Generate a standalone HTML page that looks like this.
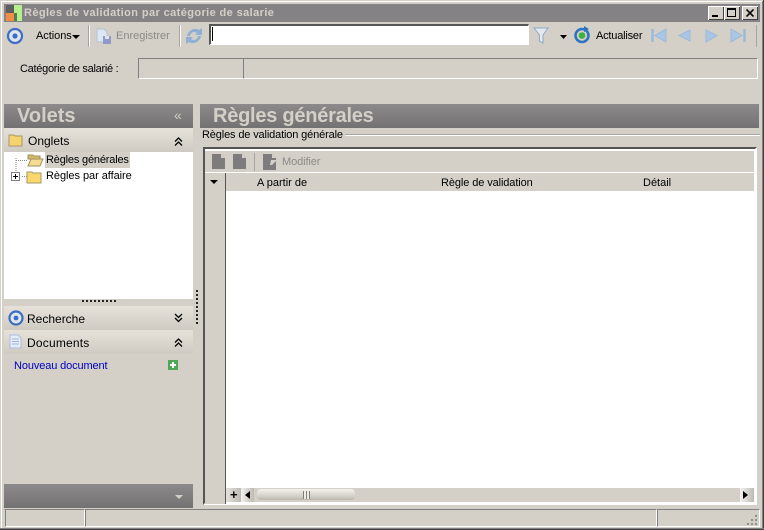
<!DOCTYPE html>
<html><head><meta charset="utf-8"><style>
html,body{margin:0;padding:0;background:#d4d0c8;}
#w{position:relative;width:764px;height:530px;overflow:hidden;background:#d4d0c8;font:11px "Liberation Sans",sans-serif;color:#000;}
#w div,#w span.t,#w svg{position:absolute;}
.t{position:absolute;white-space:nowrap;line-height:13px;}
.panel{background:linear-gradient(#e6e2da,#cfcbc3);}
</style></head><body><div id="w">
<!-- window frame -->
<div style="left:0;top:0;width:764px;height:1px;background:#d4d0c8"></div>
<div style="left:1px;top:1px;width:762px;height:1px;background:#fff"></div>
<div style="left:1px;top:1px;width:1px;height:527px;background:#fff"></div>
<div style="left:762px;top:1px;width:1px;height:528px;background:#808080"></div>
<div style="left:763px;top:0;width:1px;height:530px;background:#404040"></div>
<div style="left:0;top:528px;width:764px;height:1px;background:#808080"></div>
<div style="left:0;top:529px;width:764px;height:1px;background:#404040"></div>
<!-- title bar -->
<div style="left:4px;top:4px;width:756px;height:18px;background:#848284"></div>
<div style="left:6px;top:5px;width:8px;height:8px;background:#5f5f5f"></div>
<div style="left:6px;top:13px;width:8px;height:8px;background:#f58b45"></div>
<div style="left:14px;top:5px;width:8px;height:16px;background:#b4f08c"></div>
<div style="left:14px;top:13px;width:3px;height:8px;background:#4f7f4f"></div>
<span class="t" style="left:24px;top:7px;font-weight:bold;color:#d4d0c8;letter-spacing:.4px;font-size:11px">Règles de validation par catégorie de salarie</span>
<!-- window buttons -->
<div style="left:708px;top:6px;width:16px;height:14px;background:#d4d0c8;border-top:1px solid #fff;border-left:1px solid #fff;box-sizing:border-box;box-shadow:inset -1px -1px 0 #404040"></div>
<div style="left:712px;top:15px;width:6px;height:2px;background:#000"></div>
<div style="left:724px;top:6px;width:16px;height:14px;background:#d4d0c8;border-top:1px solid #fff;border-left:1px solid #fff;box-sizing:border-box;box-shadow:inset -1px -1px 0 #404040"></div>
<div style="left:727px;top:8px;width:9px;height:9px;box-sizing:border-box;border:1px solid #000;border-top-width:2px"></div>
<div style="left:742px;top:6px;width:16px;height:14px;background:#d4d0c8;border-top:1px solid #fff;border-left:1px solid #fff;box-sizing:border-box;box-shadow:inset -1px -1px 0 #404040"></div>
<svg style="left:746px;top:9px" width="8" height="8"><path d="M0.5 0.5L7.5 7.5M7.5 0.5L0.5 7.5" stroke="#000" stroke-width="1.6"/></svg>
<!-- toolbar -->
<svg style="left:6px;top:27px" width="18" height="18"><circle cx="9" cy="9" r="7" fill="#dfe6f2" stroke="#3d6fc0" stroke-width="2.2"/><circle cx="9" cy="9" r="2.6" fill="#3d6fc0"/></svg>
<span class="t" style="left:36px;top:30px;letter-spacing:-.05px">Actions</span>
<svg style="left:72px;top:35px" width="8" height="4"><path d="M0 0H8L4 4Z" fill="#000"/></svg>
<div style="left:88px;top:25px;width:1px;height:22px;background:#a8a5a0"></div>
<div style="left:89px;top:25px;width:1px;height:22px;background:#fff"></div>
<svg style="left:96px;top:28px" width="16" height="17"><path d="M1 1H8L11 4V14H1Z" fill="#dde6f2" stroke="#b4c2d6"/><path d="M7 8H15V16H7Z" fill="#8f9ac8"/><path d="M9 8H13V11H9Z" fill="#dfe3f0"/></svg>
<span class="t" style="left:116px;top:30px;color:#8c8a86">Enregistrer</span>
<div style="left:179px;top:25px;width:1px;height:22px;background:#a8a5a0"></div>
<div style="left:180px;top:25px;width:1px;height:22px;background:#fff"></div>
<svg style="left:185px;top:27px" width="18" height="18"><path d="M2 9C3 3 10 0 14 3L17 1V8H10L12 6C9 4 6 5 5 9Z" fill="#8fb0d4"/><path d="M16 9C15 15 8 18 4 15L1 17V10H8L6 12C9 14 12 13 13 9Z" fill="#8fb0d4"/></svg>
<div style="left:209px;top:24px;width:320px;height:21px;box-sizing:border-box;background:#fff;border:1px solid #fff;border-top:2px solid #555;border-left:2px solid #555"></div>
<div style="left:212px;top:27px;width:1px;height:14px;background:#000"></div>
<svg style="left:533px;top:27px" width="16" height="18"><path d="M1 1H15L10 8V16L6.500 14V8Z" fill="#e4e9ef" stroke="#8fa9c6"/></svg>
<svg style="left:560px;top:35px" width="8" height="4"><path d="M0 0H7L3.500 4Z" fill="#000"/></svg>
<svg style="left:573px;top:26px" width="18" height="18"><circle cx="9" cy="9.500" r="6.500" fill="none" stroke="#2f74c0" stroke-width="2.600"/><circle cx="9" cy="9.500" r="3.300" fill="#39b43c"/><path d="M11 0L16 3L11 6Z" fill="#2f74c0"/></svg>
<span class="t" style="left:596px;top:30px;letter-spacing:-.2px">Actualiser</span>
<svg style="left:651px;top:27px" width="110" height="18" fill="#a9c6e6" stroke="#9cb9d9">
<path d="M1.500 2V15" stroke-width="2.500" fill="none"/><path d="M15 2V15L4 8.500Z"/>
<path d="M39 3V14L28 8.500Z"/>
<path d="M55 3V15L66 8.500Z"/>
<path d="M80 2V15L91 8.500Z"/><path d="M93.500 2V15" stroke-width="2.500" fill="none"/></svg>
<div style="left:756px;top:25px;width:1px;height:22px;background:#a8a5a0"></div>
<!-- category row -->
<span class="t" style="left:20px;top:63px;letter-spacing:-.28px">Catégorie de salarié :</span>
<div style="left:138px;top:58px;width:106px;height:21px;box-sizing:border-box;border:1px solid #fff;border-top-color:#808080;border-left-color:#808080"></div>
<div style="left:243px;top:58px;width:515px;height:21px;box-sizing:border-box;border:1px solid #fff;border-top-color:#808080;border-left-color:#808080"></div>
<!-- left pane -->
<div style="left:4px;top:104px;width:189px;height:24px;background:linear-gradient(#8c8a8a,#737272)"></div>
<span class="t" style="left:17px;top:105px;font-size:20px;line-height:22px;font-weight:bold;color:#d4d0c8">Volets</span>
<span class="t" style="left:174px;top:109px;font-size:14px;color:#d4d0c8">«</span>
<div class="panel" style="left:4px;top:128px;width:189px;height:24px"></div>
<svg style="left:8px;top:133px" width="16" height="14"><path d="M1 2H6L7 3H14V13H1Z" fill="#f5d36f" stroke="#a8976a"/></svg>
<span class="t" style="left:28px;top:135px;font-size:12px">Onglets</span>
<svg style="left:174px;top:137px" width="9" height="10" fill="none" stroke="#000" stroke-width="1.300"><path d="M1 4.500L4.500 1L8 4.500M1 8.500L4.500 5L8 8.500"/></svg>
<div style="left:4px;top:152px;width:189px;height:147px;background:#fff"></div>
<div style="left:45px;top:152px;width:85px;height:16px;background:#d4d0c8"></div>
<svg style="left:14px;top:158px" width="14" height="22" fill="none" stroke="#888" stroke-dasharray="1 1"><path d="M2 0V14M2 2.500H13M8 18.500H13"/></svg>
<svg style="left:27px;top:153px" width="17" height="14"><path d="M1 2H6L7 3H13V6H1Z" fill="#d8b868" stroke="#a08f60"/><path d="M1 13L4 6H16L13 13Z" fill="#f6dc90" stroke="#a08f60"/></svg>
<span class="t" style="left:46px;top:154px;letter-spacing:-.18px">Règles générales</span>
<div style="left:11px;top:172px;width:9px;height:9px;box-sizing:border-box;border:1px solid #808080;background:#fff"></div>
<div style="left:13px;top:176px;width:5px;height:1px;background:#000"></div>
<div style="left:15px;top:174px;width:1px;height:5px;background:#000"></div>
<svg style="left:26px;top:170px" width="16" height="14"><path d="M1 2H6L7 3H15V13H1Z" fill="#f8d86c" stroke="#a8976a"/></svg>
<span class="t" style="left:46px;top:170px;letter-spacing:-.05px">Règles par affaire</span>
<div style="left:82px;top:300px;width:34px;height:2px;background:repeating-linear-gradient(90deg,#222 0 2px,transparent 2px 4px)"></div>
<div class="panel" style="left:4px;top:306px;width:189px;height:24px"></div>
<svg style="left:8px;top:310px" width="16" height="16"><circle cx="8" cy="8" r="6.500" fill="#dfe6f2" stroke="#3d6fc0" stroke-width="2.200"/><circle cx="8" cy="8" r="2.400" fill="#3d6fc0"/></svg>
<span class="t" style="left:27px;top:313px;font-size:12px">Recherche</span>
<svg style="left:174px;top:313px" width="9" height="10" fill="none" stroke="#000" stroke-width="1.300"><path d="M1 1L4.500 4.500L8 1M1 5L4.500 8.500L8 5"/></svg>
<div class="panel" style="left:4px;top:330px;width:189px;height:24px"></div>
<svg style="left:9px;top:334px" width="14" height="15"><path d="M1 1H9L12 4V14H1Z" fill="#e6ecf9" stroke="#a9bde0"/><path d="M3 5H10M3 7.500H10M3 10H10" stroke="#9db4e0"/></svg>
<span class="t" style="left:27px;top:337px;font-size:12px;letter-spacing:.2px">Documents</span>
<svg style="left:174px;top:338px" width="9" height="10" fill="none" stroke="#000" stroke-width="1.300"><path d="M1 4.500L4.500 1L8 4.500M1 8.500L4.500 5L8 8.500"/></svg>
<span class="t" style="left:14px;top:360px;color:#0000c0;letter-spacing:-.12px">Nouveau document</span>
<svg style="left:168px;top:360px" width="10" height="10"><rect width="10" height="10" fill="#4fa85a"/><path d="M5 2V8M2 5H8" stroke="#fff" stroke-width="2"/></svg>
<div style="left:4px;top:484px;width:189px;height:24px;background:linear-gradient(#8c8a8a,#737272)"></div>
<svg style="left:175px;top:495px" width="9" height="5"><path d="M0 0H8L4 4Z" fill="#d4d0c8"/></svg>
<!-- splitter -->
<div style="left:196px;top:290px;width:1px;height:34px;border-left:2px dotted #222"></div>
<!-- right pane -->
<div style="left:200px;top:104px;width:559px;height:24px;background:linear-gradient(#8c8a8a,#737272)"></div>
<span class="t" style="left:213px;top:105px;font-size:20px;line-height:22px;font-weight:bold;color:#d4d0c8;letter-spacing:-.25px">Règles générales</span>
<span class="t" style="left:202px;top:129px;letter-spacing:-.14px">Règles de validation générale</span>
<div style="left:345px;top:134px;width:415px;height:1px;background:#a8a5a0"></div>
<div style="left:345px;top:135px;width:415px;height:1px;background:#fff"></div>
<!-- grid -->
<div style="left:203px;top:147px;width:554px;height:358px;box-sizing:border-box;border:2px solid #fff;border-top-color:#555;border-left-color:#555;background:#fff"></div>
<div style="left:205px;top:151px;width:549px;height:21px;background:#d4d0c8"></div>
<div style="left:325px;top:172px;width:429px;height:1px;background:#fff"></div>
<svg style="left:212px;top:154px" width="14" height="16"><path d="M0 0H9L13 4V15H0Z" fill="#7d7b7b"/><path d="M9 0L13 4H9Z" fill="#d4d0c8"/></svg>
<svg style="left:233px;top:154px" width="14" height="16"><path d="M0 0H9L13 4V15H0Z" fill="#7d7b7b"/><path d="M9 0L13 4H9Z" fill="#d4d0c8"/></svg>
<div style="left:254px;top:153px;width:1px;height:18px;background:#a8a5a0"></div>
<svg style="left:263px;top:154px" width="16" height="17"><path d="M0 0H9L13 4V16H0Z" fill="#7d7b7b"/><path d="M9 0L13 4H9ZM8 6L14 6L9 11H7Z" fill="#d4d0c8"/></svg>
<span class="t" style="left:282px;top:156px;color:#8c8a86;letter-spacing:-.1px">Modifier</span>
<div style="left:205px;top:173px;width:549px;height:18px;background:#d4d0c8"></div>
<div style="left:205px;top:173px;width:21px;height:331px;background:#d4d0c8"></div>
<div style="left:225px;top:173px;width:1px;height:331px;background:#555"></div>
<svg style="left:210px;top:180px" width="9" height="5"><path d="M0 0H8L4 4Z" fill="#000"/></svg>
<span class="t" style="left:257px;top:177px">A partir de</span>
<span class="t" style="left:441px;top:177px;letter-spacing:-.1px">Règle de validation</span>
<span class="t" style="left:643px;top:177px">Détail</span>
<!-- scroll -->
<div style="left:226px;top:488px;width:528px;height:14px;background:#d4d0c8"></div>
<div style="left:226px;top:488px;width:15px;height:14px;background:linear-gradient(90deg,#e4e1da,#bdbab3)"></div>
<span class="t" style="left:230px;top:488px;font-size:13px;font-weight:bold">+</span>
<div style="left:241px;top:488px;width:13px;height:14px;background:linear-gradient(90deg,#f4f2ee,#bdbab3)"></div>
<svg style="left:245px;top:491px" width="6" height="9"><path d="M5 0V8L0 4Z" fill="#000"/></svg>
<div style="left:257px;top:489px;width:98px;height:11px;border-radius:4px;background:linear-gradient(#f5f3ee,#d0cdc5 70%,#b9b6ae)"></div>
<div style="left:303px;top:491px;width:7px;height:8px;background:repeating-linear-gradient(90deg,#807e7a 0 1px,#efede8 1px 3px)"></div>
<div style="left:740px;top:488px;width:14px;height:14px;background:linear-gradient(90deg,#f4f2ee,#bdbab3)"></div>
<svg style="left:743px;top:491px" width="6" height="9"><path d="M0 0V8L5 4Z" fill="#000"/></svg>
<!-- status bar -->
<div style="left:4px;top:509px;width:756px;height:1px;background:#a8a5a0"></div>
<div style="left:5px;top:509px;width:80px;height:18px;box-sizing:border-box;border:1px solid #fff;border-top-color:#808080;border-left-color:#808080"></div>
<div style="left:85px;top:509px;width:572px;height:18px;box-sizing:border-box;border:1px solid #fff;border-top-color:#808080;border-left-color:#808080"></div>
<div style="left:657px;top:509px;width:103px;height:18px;box-sizing:border-box;border:1px solid #fff;border-top-color:#808080;border-left-color:#808080"></div>
<svg style="left:746px;top:514px" width="12" height="12" fill="#908e88"><rect x="9" y="1" width="2" height="2"/><rect x="5" y="5" width="2" height="2"/><rect x="9" y="5" width="2" height="2"/><rect x="1" y="9" width="2" height="2"/><rect x="5" y="9" width="2" height="2"/><rect x="9" y="9" width="2" height="2"/></svg>
</div></body></html>
